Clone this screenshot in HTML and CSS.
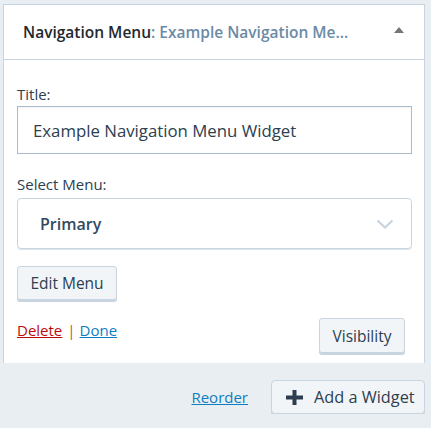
FILE: index.html
```html
<!DOCTYPE html>
<html>
<head>
<meta charset="utf-8">
<link rel="stylesheet" href="styles.css">
</head>
<body>
<div class="widget">
  <div class="widget-top">
    <h3 class="widget-title">Navigation Menu<span class="in-title">: Example Navigation Me...</span></h3>
    <span class="toggle"></span>
  </div>
  <div class="widget-inside">
    <label class="field-label">Title:</label>
    <div class="text-input">Example Navigation Menu Widget</div>
    <label class="field-label select-label">Select Menu:</label>
    <div class="select">
      <span class="select-value">Primary</span>
      <svg class="chevron" width="18" height="10" viewBox="0 0 18 10"><path d="M1.5 1.5 L9 8.5 L16.5 1.5" fill="none" stroke="#c9d3dd" stroke-width="2.2"/></svg>
    </div>
    <div class="button edit-btn">Edit Menu</div>
    <div class="actions">
      <div class="links"><a class="delete">Delete</a><span class="sep">|</span><a class="done">Done</a></div>
      <div class="button vis-btn">Visibility</div>
    </div>
  </div>
</div>
<div class="footer">
  <a class="reorder">Reorder</a>
  <div class="button add-btn">
    <svg class="plus" width="17" height="15" viewBox="0 0 17 15"><rect x="0" y="5.5" width="17" height="4" fill="#2c3e50"/><rect x="6.5" y="0" width="4" height="15" fill="#2c3e50"/></svg>
    <span>Add a Widget</span>
  </div>
</div>
</body>
</html>
```
FILE: styles.css
```css
html, body {
  margin: 0;
  padding: 0;
  background: #e9eef2;
  font-family: "Open Sans", "Noto Sans", sans-serif;
  color: #2c3e50;
}
.widget {
  margin: 4px 0 0 3px;
  width: 420px;
  background: #fff;
  border: 1px solid #c8d5e0;
  border-bottom: none;
}
.widget-top {
  height: 54px;
  border-bottom: 1px solid #c8d5e0;
  display: flex;
  align-items: center;
  padding: 0 20px 0 19px;
}
.widget-title {
  margin: 0;
  flex: 1;
  font-size: 15.5px;
  font-weight: 600;
  color: #23282d;
  white-space: nowrap;
}
.in-title {
  color: #6b8aa6;
}
.toggle {
  width: 0;
  height: 0;
  border-left: 5px solid transparent;
  border-right: 5px solid transparent;
  border-bottom: 6px solid #72777c;
  margin-top: -4px;
}
.widget-inside {
  padding: 24px 12px 10px 13px;
}
.field-label {
  display: block;
  font-size: 15px;
  line-height: 20px;
  color: #2c3e50;
  margin-bottom: 2px;
}
.text-input {
  height: 46px;
  border: 1px solid #a9bccd;
  display: flex;
  align-items: center;
  padding-left: 15px;
  font-size: 16.8px;
  color: #2c3e50;
  box-shadow: inset 0 1px 2px rgba(0,0,0,0.05);
}
.select-label {
  margin-top: 20px;
  margin-bottom: 4px;
}
.select {
  height: 49px;
  border: 1px solid #c8d5e0;
  border-radius: 4px;
  display: flex;
  align-items: center;
  padding: 0 17px 0 22px;
  box-shadow: 0 1px 0 #dce4eb;
}
.select-value {
  flex: 1;
  font-size: 16px;
  font-weight: 600;
  color: #34495e;
}
.button {
  display: inline-flex;
  align-items: center;
  background: #f2f5f7;
  border: 1px solid #c8d5e0;
  border-radius: 3px;
  box-shadow: 0 2px 0 #c8d5e0;
  color: #2c3e50;
  font-size: 15.5px;
  box-sizing: border-box;
}
.edit-btn {
  margin-top: 17px;
  height: 34px;
  width: 100px;
  justify-content: center;
}
.actions {
  display: flex;
  justify-content: space-between;
  align-items: flex-start;
  margin-top: 18px;
  padding-right: 7px;
}
.links {
  font-size: 15px;
  line-height: 20px;
  margin-top: 2px;
}
.delete {
  color: #bc0b0b;
  text-decoration: underline;
}
.done {
  color: #0e7ec0;
  text-decoration: underline;
}
.sep {
  color: #c0561b;
  margin: 0 4px 0 5px;
}
.vis-btn {
  height: 35px;
  width: 86px;
  justify-content: center;
}
.footer {
  display: flex;
  justify-content: flex-end;
  align-items: center;
  padding: 17px 6px 0 0;
  gap: 23px;
}
.reorder {
  color: #0e7ec0;
  text-decoration: underline;
  font-size: 15px;
}
.add-btn {
  height: 34px;
  width: 154px;
  padding-left: 14px;
  gap: 11px;
  font-size: 16.3px;
  border-radius: 4px;
}
.plus {
  display: block;
}
```
